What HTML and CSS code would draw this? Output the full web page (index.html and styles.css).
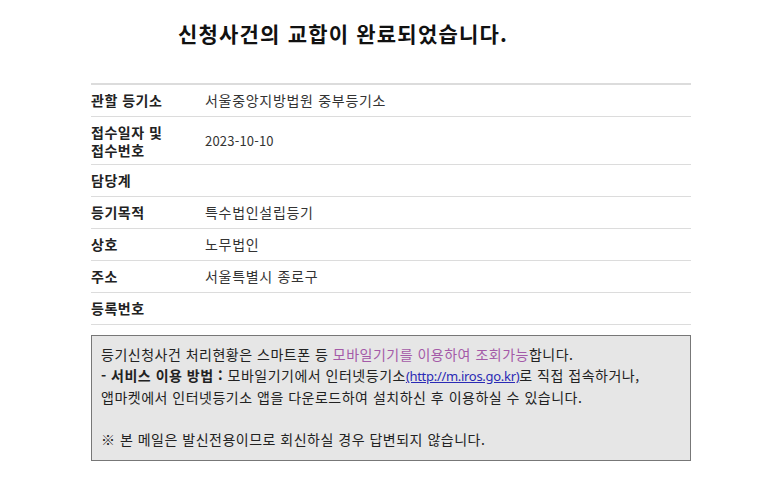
FILE: index.html
```html
<!DOCTYPE html>
<html lang="ko">
<head>
<meta charset="utf-8">
<link rel="stylesheet" href="styles.css">
</head>
<body>
<div class="wrap">
  <h1 class="title">신청사건의 교합이 완료되었습니다.</h1>
  <table class="info">
    <tr class="r1"><th>관할 등기소</th><td>서울중앙지방법원 중부등기소</td></tr>
    <tr class="r2"><th>접수일자 및<br>접수번호</th><td><span class="num">2023-10-10</span></td></tr>
    <tr><th>담당계</th><td></td></tr>
    <tr><th>등기목적</th><td>특수법인설립등기</td></tr>
    <tr><th>상호</th><td>노무법인</td></tr>
    <tr><th>주소</th><td>서울특별시 종로구</td></tr>
    <tr><th>등록번호</th><td></td></tr>
  </table>
  <div class="notice">
    <p>등기신청사건 처리현황은 스마트폰 등 <span class="hl">모바일기기를 이용하여 조회가능</span>합니다.</p>
    <p><b>- 서비스 이용 방법 :</b> 모바일기기에서 인터넷등기소<a href="#">(http://m.iros.go.kr)</a>로 직접 접속하거나,</p>
    <p>앱마켓에서 인터넷등기소 앱을 다운로드하여 설치하신 후 이용하실 수 있습니다.</p>
    <p class="gap">※ 본 메일은 발신전용이므로 회신하실 경우 답변되지 않습니다.</p>
  </div>
</div>
</body>
</html>
```
FILE: styles.css
```css
html, body { margin: 0; padding: 0; background: #fff; }
body { font-family: "Noto Sans CJK KR", "Noto Sans", sans-serif; color: #222; }
.wrap { width: 600px; margin-left: 91px; padding-top: 20px; }
.title { margin: 0 0 0 87px; font-size: 21px; line-height: 26px; font-weight: 700; color: #111; letter-spacing: 1.2px; }
.info { margin-top: 37px; width: 600px; border-collapse: collapse; border-top: 2px solid #dcdcdc; }
.info th, .info td { border-bottom: 1px solid #dcdcdc; padding: 0; height: 31px; vertical-align: middle; line-height: 17px; }
.info th { width: 114px; text-align: left; font-weight: 700; color: #222; font-size: 14px; letter-spacing: 0.5px; }
.info tr.r2 th { line-height: 18px; }
.info td { color: #333; font-size: 14px; letter-spacing: 0.7px; }
.info td .num { font-size: 13px; letter-spacing: 0.2px; }
.info tr.r1 th, .info tr.r1 td { height: 31px; }
.info tr.r2 th, .info tr.r2 td { height: 47px; }
.notice { margin-top: 10px; border: 1px solid #777; background: #e6e6e6; padding: 8px 9px 10px 9px; font-size: 14px; line-height: 21px; color: #222; height: 106px; letter-spacing: 0.5px; }
.notice p { margin: 0; }
.notice p.gap { margin-top: 21px; }
.notice .hl { color: #a45aa8; }
.notice a { color: #2a2ab5; text-decoration: underline; font-family: "Noto Sans", sans-serif; font-size: 13px; letter-spacing: -0.3px; }
```
